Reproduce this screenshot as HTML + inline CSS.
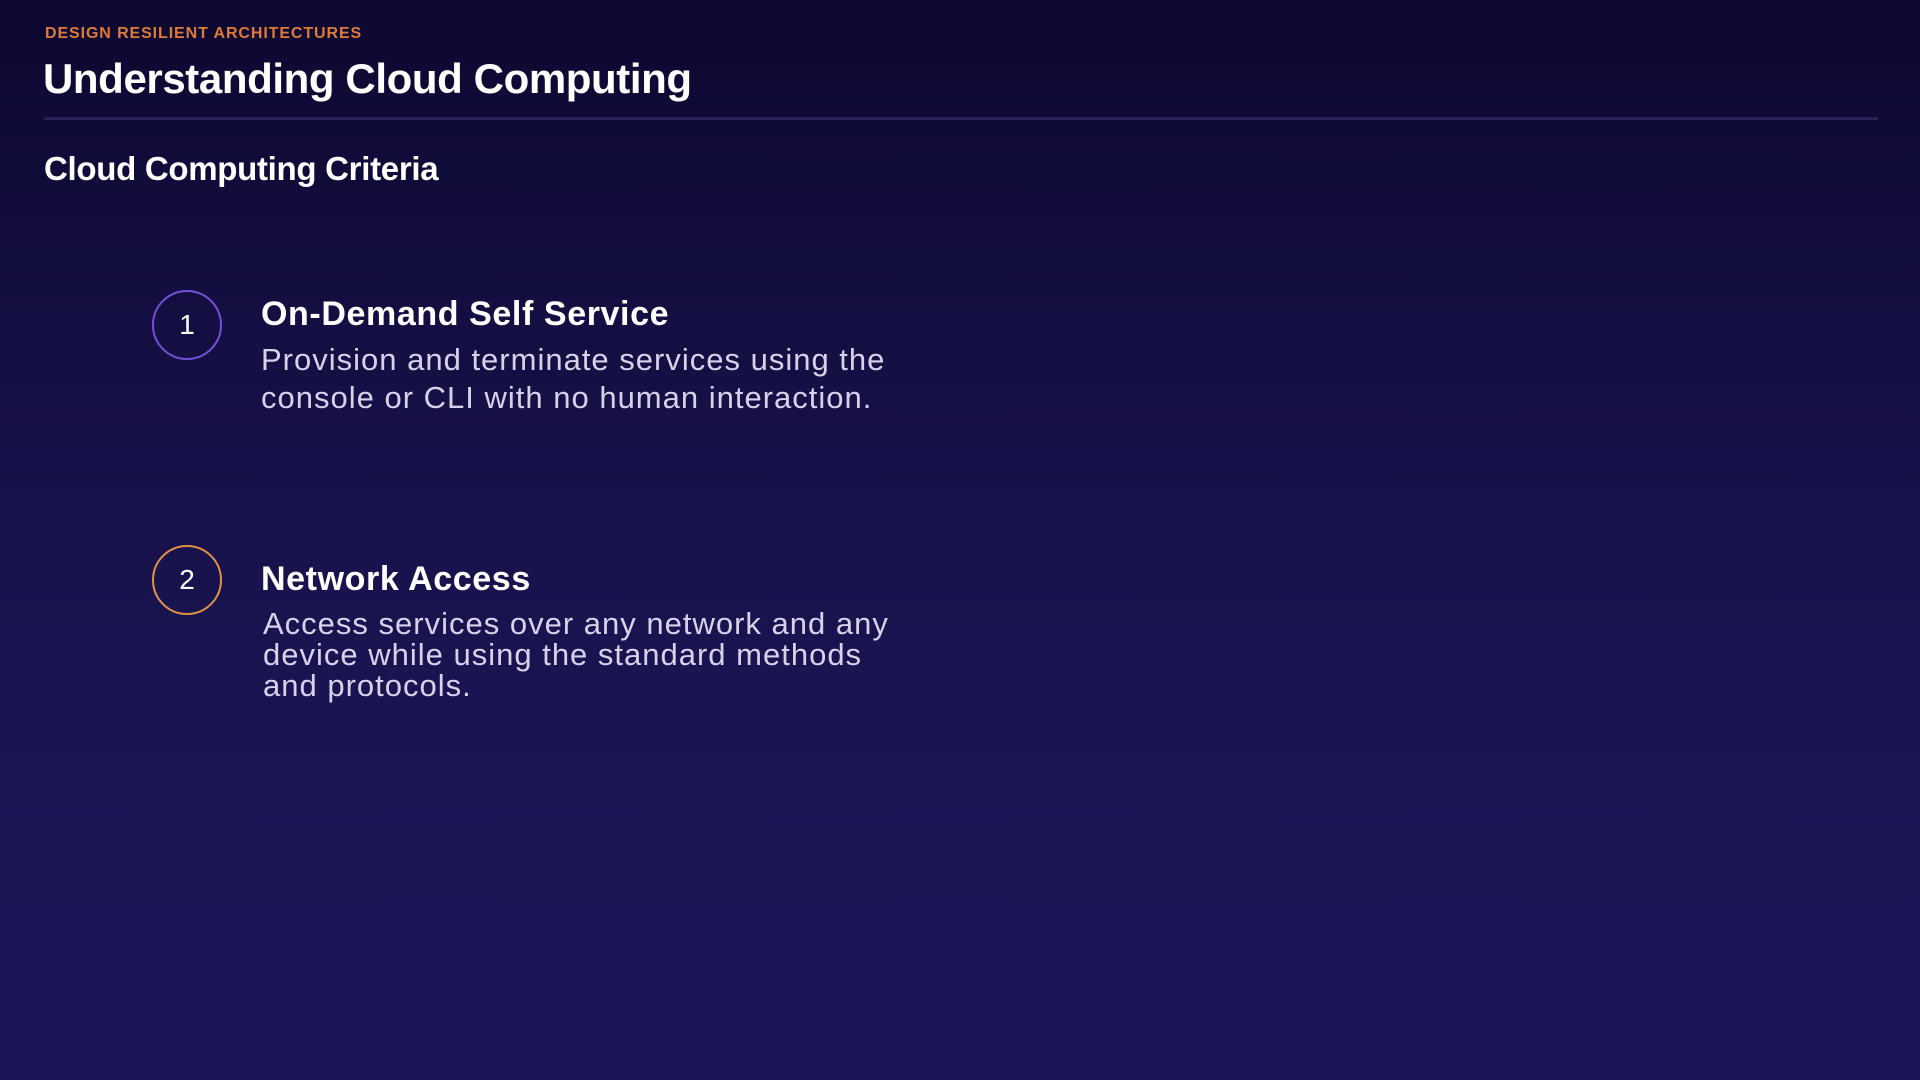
<!DOCTYPE html>
<html><head><meta charset="utf-8"><style>
html,body{margin:0;padding:0}
body{width:1920px;height:1080px;overflow:hidden;position:relative;font-family:"Liberation Sans",sans-serif;
background:linear-gradient(180deg,#0c0830 0%,#140f42 30%,#1a1552 65%,#1c1657 100%);color:#fff}
.a{position:absolute;white-space:nowrap}
.eb{left:45px;top:25px;font-size:16px;font-weight:bold;color:#e07a3a;letter-spacing:0.9px}
.t{left:43px;top:55px;font-size:42px;font-weight:bold;letter-spacing:-0.4px}
.ln{left:44px;top:117px;width:1834px;height:3px;background:#28225a}
.st{left:44px;top:150px;font-size:33px;font-weight:bold;letter-spacing:-0.3px}
.c{position:absolute;width:70px;height:70px;border-radius:50%;box-sizing:border-box;font-size:28px;display:flex;align-items:center;justify-content:center;color:#fff}
.h{font-size:34px;font-weight:bold;letter-spacing:0.6px}
.d{font-size:31px;color:#d6d2ea;line-height:38px;letter-spacing:1px}
</style></head><body>
<div class="a eb">DESIGN RESILIENT ARCHITECTURES</div>
<div class="a t">Understanding Cloud Computing</div>
<div class="a ln"></div>
<div class="a st">Cloud Computing Criteria</div>

<div class="c" style="left:152px;top:290px;border:2px solid #7350d8">1</div>
<div class="a h" style="left:261px;top:295px">On-Demand Self Service</div>
<div class="a d" style="left:261px;top:341px">Provision and terminate services using the<br>console or CLI with no human interaction.</div>

<div class="c" style="left:152px;top:545px;border:2px solid #e2904a">2</div>
<div class="a h" style="left:261px;top:560px">Network Access</div>
<div class="a d" style="left:263px;top:608px;line-height:31px">Access services over any network and any<br>device while using the standard methods<br>and protocols.</div>
</body></html>
